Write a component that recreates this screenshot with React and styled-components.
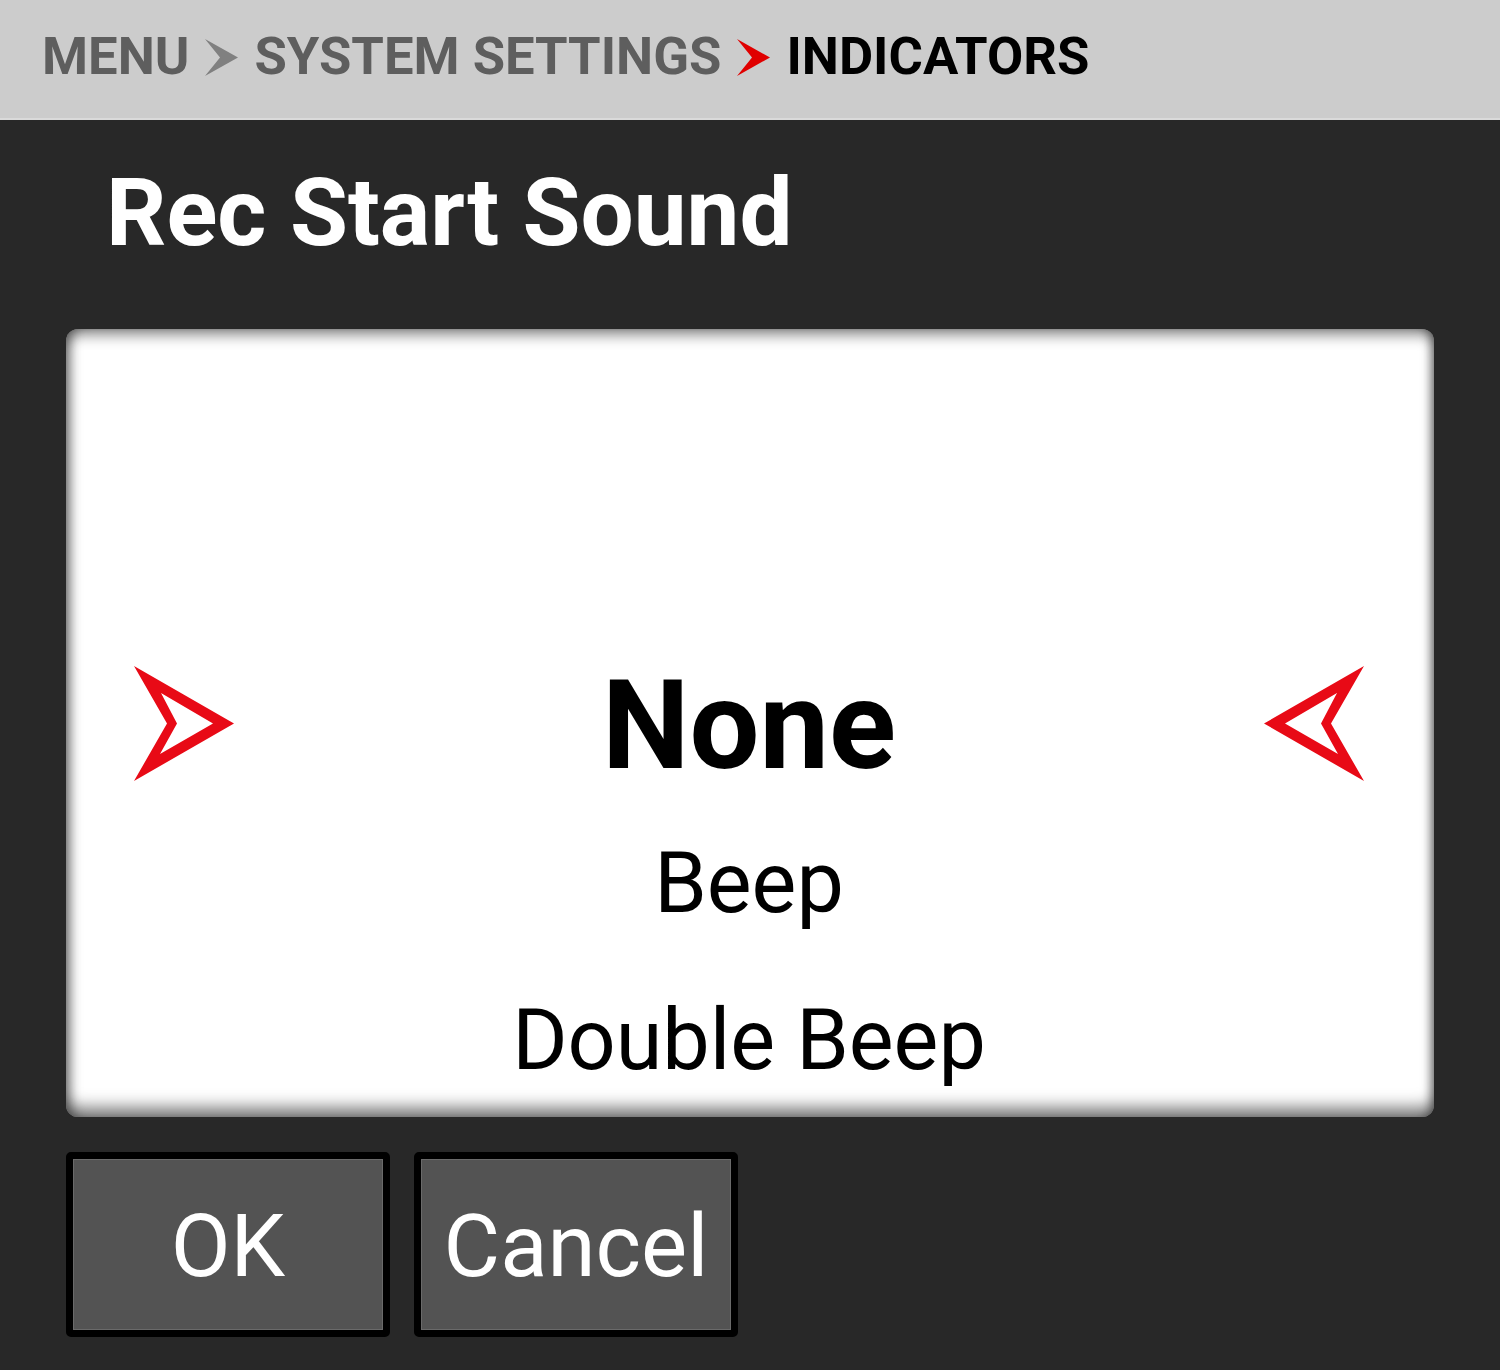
import React from "react";
import styled, { createGlobalStyle } from "styled-components";

const Global = createGlobalStyle`
  html, body { margin: 0; padding: 0; background: #282828; }
  body { font-family: Roboto, "Liberation Sans", sans-serif; }
  #root { min-height: 1370px; }
`;

const Page = styled.div`
  width: 1500px;
  height: 1370px;
  background: #282828;
  display: flex;
  flex-direction: column;
  overflow: hidden;
`;

const Header = styled.header`
  height: 120px;
  box-sizing: border-box;
  background: #cccccc;
  border-bottom: 2px solid #dadada;
  display: flex;
  align-items: center;
  padding: 0 0 6px 42px;
  gap: 16px;
`;

const Crumb = styled.span`
  font-family: Roboto, "Liberation Sans", sans-serif;
  font-weight: 700;
  font-size: 52.6px;
  line-height: 1;
  color: ${(p) => (p.$active ? "#000000" : "#5e5e5e")};
`;

const Sep = styled.svg`
  width: 33px;
  height: 37px;
  flex: none;
  margin-top: 2px;
`;

const Title = styled.h1`
  margin: 46px 0 0 106px;
  font-family: Roboto, "Liberation Sans", sans-serif;
  font-weight: 700;
  font-size: 94.3px;
  line-height: 1;
  color: #ffffff;
`;

const Wheel = styled.div`
  margin: 69px 66px 0 66px;
  height: 788px;
  background: #ffffff;
  border-radius: 12px;
  box-shadow:
    inset 0 10px 14px -4px rgba(0, 0, 0, 0.45),
    inset 0 -14px 16px -4px rgba(0, 0, 0, 0.5),
    inset 10px 0 12px -5px rgba(0, 0, 0, 0.35),
    inset -8px 0 10px -5px rgba(0, 0, 0, 0.35);
  display: grid;
  grid-template-rows: repeat(5, 1fr);
`;

const Slot = styled.div`
  display: flex;
  align-items: center;
  justify-content: ${(p) => (p.$selected ? "space-between" : "center")};
  padding: 6px 70px 0 68px;
  font-family: Roboto, "Liberation Sans", sans-serif;
  font-weight: ${(p) => (p.$selected ? 700 : 400)};
  font-size: ${(p) => (p.$selected ? "124px" : "84.5px")};
  line-height: 1;
  color: #000000;
`;

const Arrow = styled.svg`
  width: 100px;
  height: 115px;
  flex: none;
  margin-top: -6px;
  transform: ${(p) => (p.$flip ? "scaleX(-1)" : "none")};
`;

const Buttons = styled.div`
  display: flex;
  gap: 24px;
  margin: 35px 0 0 66px;
`;

const Button = styled.button`
  width: 324px;
  height: 185px;
  box-sizing: border-box;
  border: 7px solid #000000;
  border-radius: 5px;
  background: #535353;
  box-shadow: inset 0 0 0 1px #6a6a6a;
  color: #ffffff;
  font-family: Roboto, "Liberation Sans", sans-serif;
  font-weight: 400;
  font-size: 87px;
  line-height: 1;
  display: flex;
  align-items: center;
  justify-content: center;
  padding: 4px 0 0 0;
  cursor: pointer;
`;

const Chevron = ({ color }) => (
  <Sep viewBox="0 0 33 37">
    <polygon points="0,0 33,18.5 0,37 15,18.5" fill={color} />
  </Sep>
);

const PickArrow = ({ flip }) => (
  <Arrow viewBox="0 0 100 115" $flip={flip}>
    <path
      fillRule="evenodd"
      fill="#e80a16"
      d="M0,0 L100,57.5 L0,115 L33,57.5 Z M27,27 L79,57.5 L26,88 L43,57.5 Z"
    />
  </Arrow>
);

const options = ["None", "Beep", "Double Beep"];

export default function App() {
  return (
    <Page>
      <Global />
      <Header>
        <Crumb>MENU</Crumb>
        <Chevron color="#808080" />
        <Crumb>SYSTEM SETTINGS</Crumb>
        <Chevron color="#e00000" />
        <Crumb $active>INDICATORS</Crumb>
      </Header>
      <Title>Rec Start Sound</Title>
      <Wheel>
        <Slot />
        <Slot />
        <Slot $selected>
          <PickArrow />
          <span>{options[0]}</span>
          <PickArrow flip />
        </Slot>
        <Slot>{options[1]}</Slot>
        <Slot>{options[2]}</Slot>
      </Wheel>
      <Buttons>
        <Button>OK</Button>
        <Button>Cancel</Button>
      </Buttons>
    </Page>
  );
}
